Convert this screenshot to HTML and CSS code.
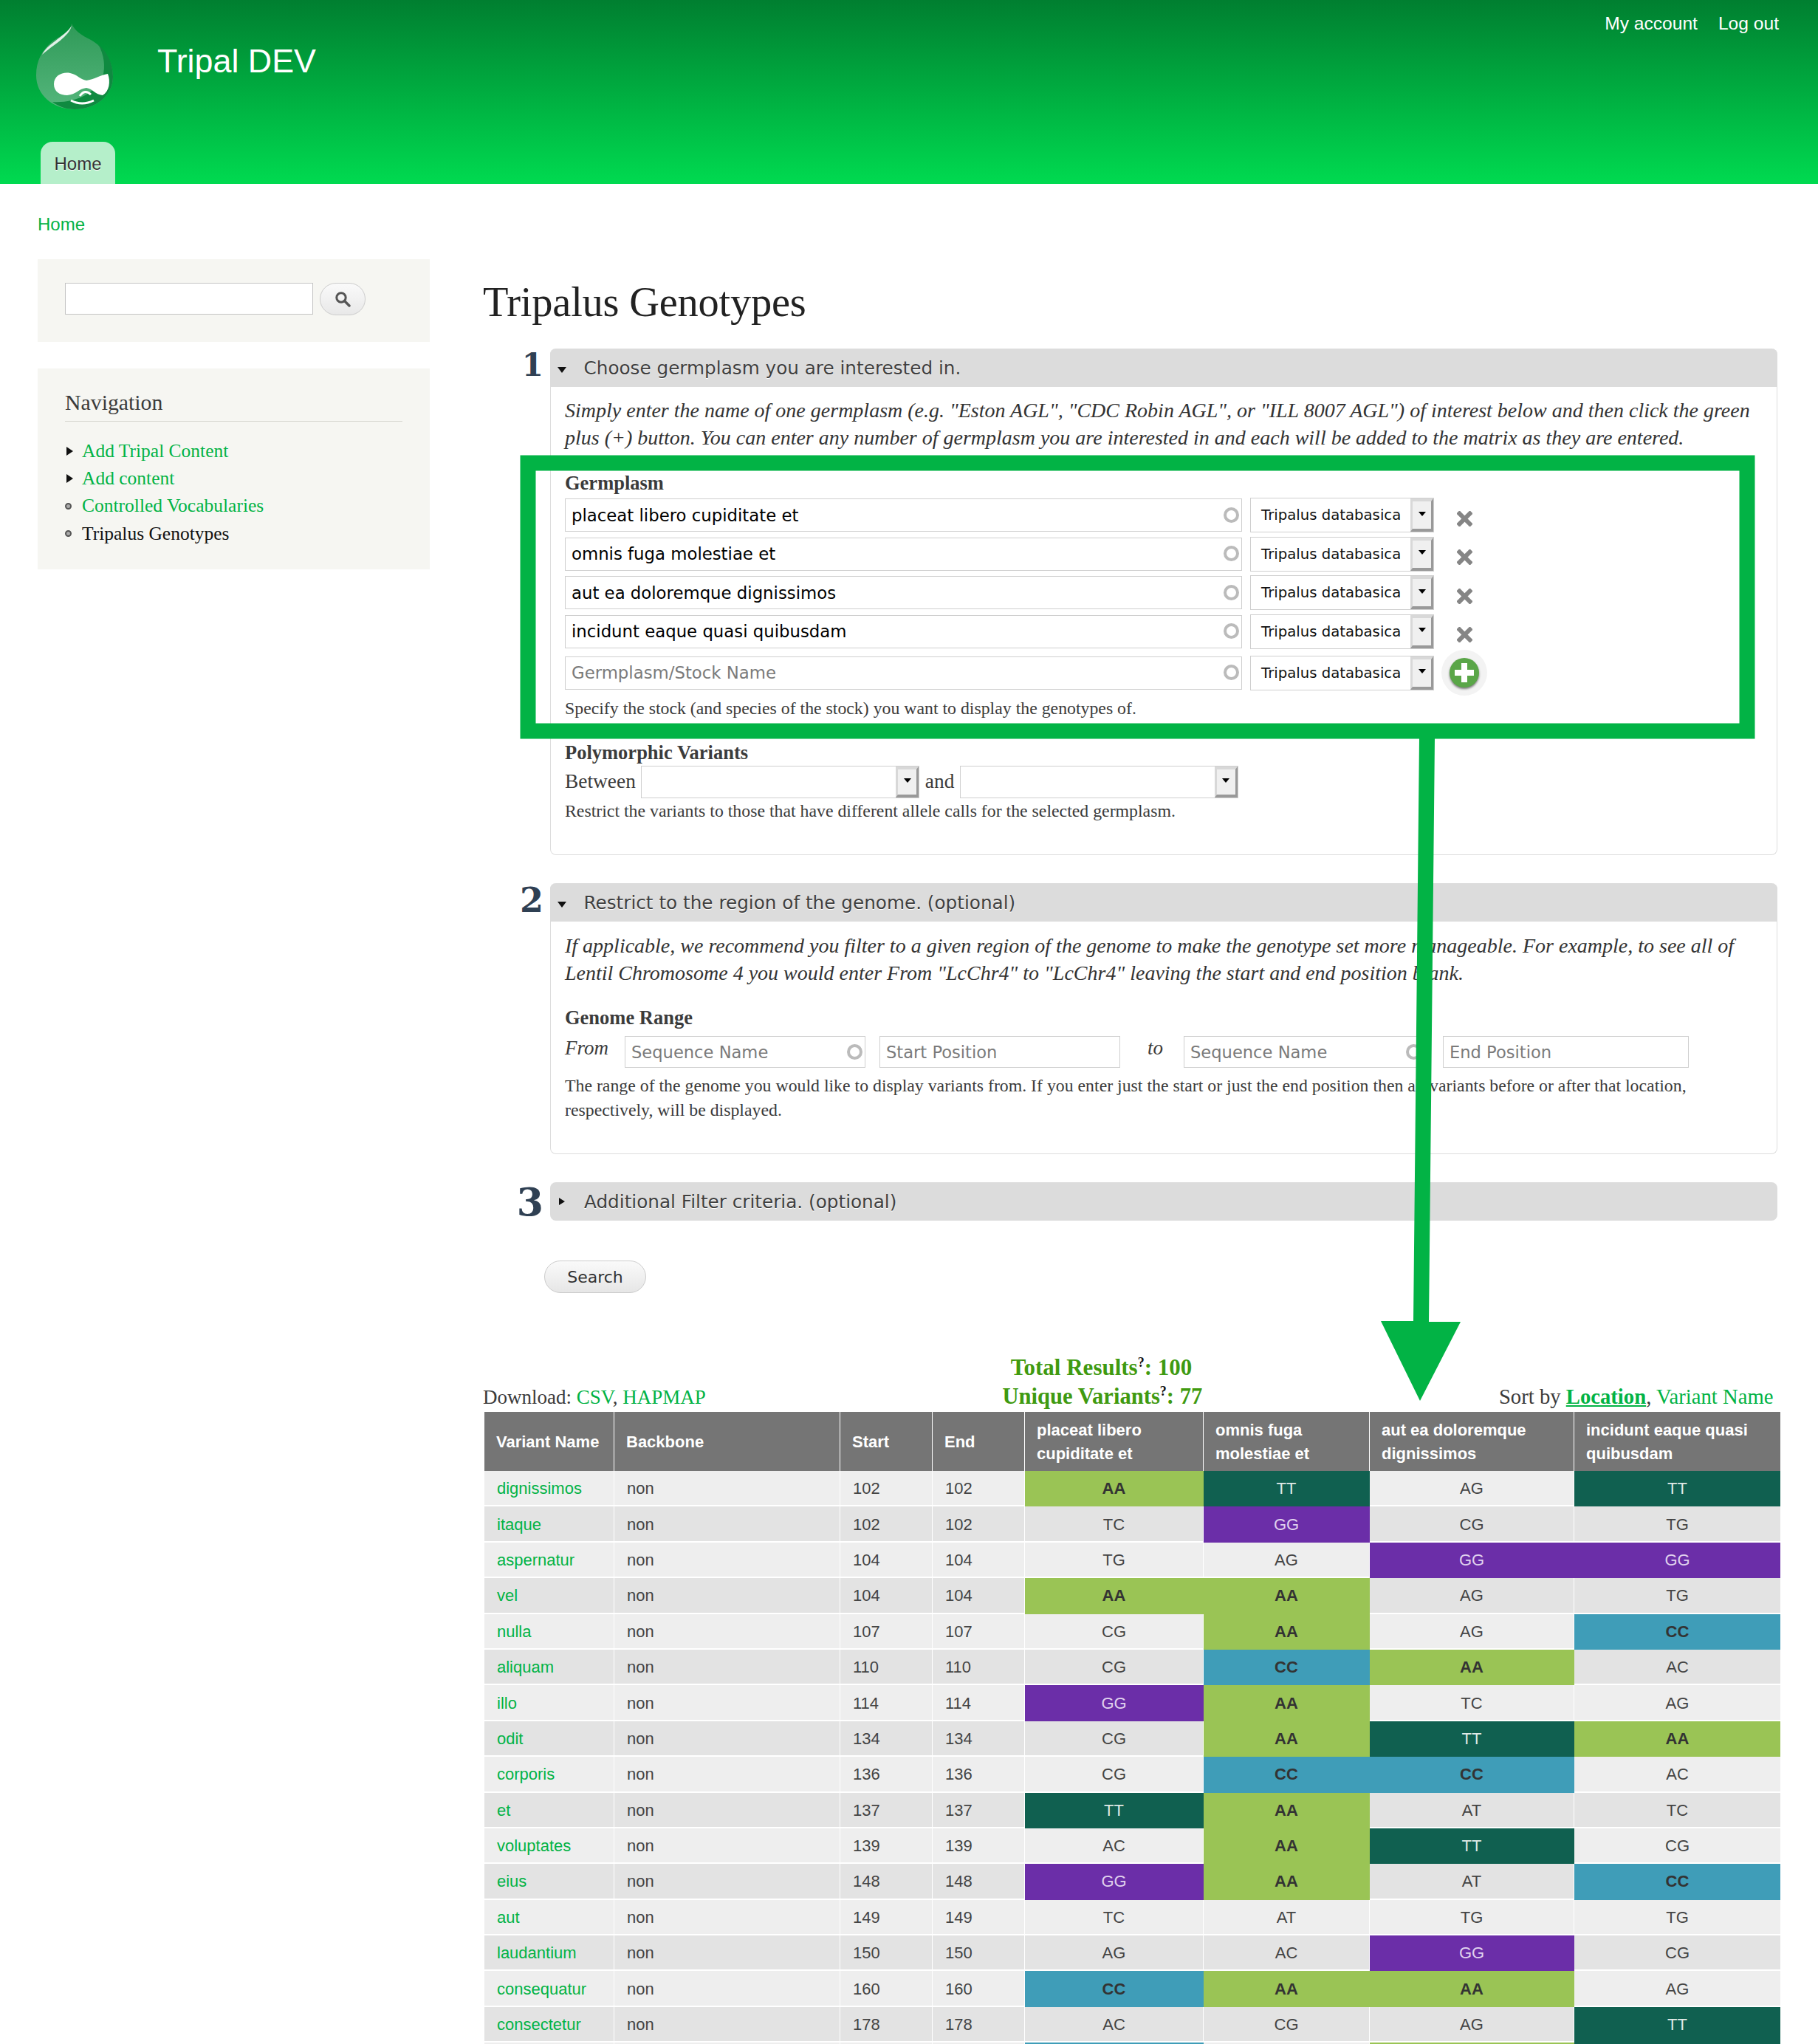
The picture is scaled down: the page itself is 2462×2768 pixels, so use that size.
FILE: index.html
```html
<!DOCTYPE html>
<html lang="en">
  <head>
    <meta charset="UTF-8" />
    <title>Tripalus Genotypes | Tripal DEV</title>
    <link rel="stylesheet" href="styles.css">
  </head>
  <body>
    <header class="site-header">
      <div class="branding">
        <svg class="logo" width="104" height="116" viewBox="0 0 104 116">
          <defs>
            <linearGradient id="dropFill" x1="0" y1="0" x2="0" y2="1">
              <stop offset="0" stop-color="#2f9a58" />
              <stop offset="1" stop-color="#55b67c" />
            </linearGradient>
          </defs>
          <path d="M48 0C52 10 62 16 74 22C92 32 104 52 104 72C104 98 80 116 52 116C22 116 0 96 0 70C0 50 8 36 22 24C34 16 46 12 48 0Z" fill="url(#dropFill)" />
          <path d="M84 28C96 38 104 54 104 72C104 98 80 116 52 116C40 116 30 112 22 106C50 108 80 96 90 72C94 58 92 42 84 28Z" fill="#0f8a40" />
          <path d="M48 3C44 18 24 28 8 42C14 28 38 18 48 3Z" fill="#ffffff" opacity="0.85" />
          <path d="M24 82C24 70 36 65 46 67C56 69 60 76 68 77C78 76 88 69 97 68C101 78 99 92 90 97C80 96 76 88 68 87C58 88 54 96 42 97C32 97 24 92 24 82Z" fill="#ffffff" />
          <path d="M47 104Q62 112 78 104" fill="none" stroke="#ffffff" stroke-width="3" />
          <path d="M59 98Q66 88 74 96" fill="none" stroke="#ffffff" stroke-width="3" />
        </svg>
        <a class="site-name" href="#">Tripal DEV</a>
        <nav class="secondary-menu">
          <a href="#">My account</a>
          <a href="#">Log out</a>
        </nav>
      </div>
      <a class="tab" href="#">Home</a>
    </header>

    <div class="breadcrumb"><a href="#">Home</a></div>

    <div class="page">
      <aside class="sidebar">
        <form class="block search-block">
          <input class="search-input" type="text" />
          <button class="search-btn" type="button" aria-label="Search">
            <svg width="22" height="22" viewBox="0 0 22 22">
              <circle cx="9" cy="9" r="6.2" fill="none" stroke="#555" stroke-width="3" />
              <path d="M13.5 13.5L20 20" stroke="#555" stroke-width="3.4" stroke-linecap="round" />
            </svg>
          </button>
        </form>
        <div class="block nav-block">
          <h2>Navigation</h2>
          <ul>
            <li class="collapsed"><a href="#">Add Tripal Content</a></li>
            <li class="collapsed"><a href="#">Add content</a></li>
            <li class="leaf"><a href="#">Controlled Vocabularies</a></li>
            <li class="leaf"><a class="active" href="#">Tripalus Genotypes</a></li>
          </ul>
        </div>
      </aside>

      <main class="content">
        <h1>Tripalus Genotypes</h1>

        <section class="step step-one">
          <div class="step-number">1</div>
          <div class="fieldset">
            <div class="legend"><span class="arrow-down"></span>Choose germplasm you are interested in.</div>
            <div class="fieldset-body">
              <p class="description">Simply enter the name of one germplasm (e.g. "Eston AGL", "CDC Robin AGL", or "ILL 8007 AGL") of interest below and then click the green plus (+) button. You can enter any number of germplasm you are interested in and each will be added to the matrix as they are entered.</p>

              <div class="field-label germplasm-label">Germplasm</div>
              <div class="germ-row">
                <div class="input-wrap germ-input"><input type="text" value="placeat libero cupiditate et" /></div>
                <div class="select species"><span>Tripalus databasica</span><i></i></div>
                <svg class="remove" width="21" height="21" viewBox="0 0 21 21"><path d="M3.5 3.5L17.5 17.5M17.5 3.5L3.5 17.5" stroke="#858585" stroke-width="6" stroke-linecap="square" /></svg>
              </div>
              <div class="germ-row">
                <div class="input-wrap germ-input"><input type="text" value="omnis fuga molestiae et" /></div>
                <div class="select species"><span>Tripalus databasica</span><i></i></div>
                <svg class="remove" width="21" height="21" viewBox="0 0 21 21"><path d="M3.5 3.5L17.5 17.5M17.5 3.5L3.5 17.5" stroke="#858585" stroke-width="6" stroke-linecap="square" /></svg>
              </div>
              <div class="germ-row">
                <div class="input-wrap germ-input"><input type="text" value="aut ea doloremque dignissimos" /></div>
                <div class="select species"><span>Tripalus databasica</span><i></i></div>
                <svg class="remove" width="21" height="21" viewBox="0 0 21 21"><path d="M3.5 3.5L17.5 17.5M17.5 3.5L3.5 17.5" stroke="#858585" stroke-width="6" stroke-linecap="square" /></svg>
              </div>
              <div class="germ-row">
                <div class="input-wrap germ-input"><input type="text" value="incidunt eaque quasi quibusdam" /></div>
                <div class="select species"><span>Tripalus databasica</span><i></i></div>
                <svg class="remove" width="21" height="21" viewBox="0 0 21 21"><path d="M3.5 3.5L17.5 17.5M17.5 3.5L3.5 17.5" stroke="#858585" stroke-width="6" stroke-linecap="square" /></svg>
              </div>
              <div class="germ-row germ-row-add">
                <div class="input-wrap germ-input"><input type="text" placeholder="Germplasm/Stock Name" /></div>
                <div class="select species"><span>Tripalus databasica</span><i></i></div>
                <button class="add-btn" type="button" aria-label="Add"></button>
              </div>
              <p class="help germ-help">Specify the stock (and species of the stock) you want to display the genotypes of.</p>

              <div class="field-label poly-label">Polymorphic Variants</div>
              <div class="poly-row">
                <span>Between</span>
                <div class="select poly-select"><span></span><i></i></div>
                <span>and</span>
                <div class="select poly-select"><span></span><i></i></div>
              </div>
              <p class="help poly-help">Restrict the variants to those that have different allele calls for the selected germplasm.</p>
            </div>
          </div>
        </section>

        <section class="step step-two">
          <div class="step-number">2</div>
          <div class="fieldset">
            <div class="legend"><span class="arrow-down"></span>Restrict to the region of the genome. (optional)</div>
            <div class="fieldset-body">
              <p class="description">If applicable, we recommend you filter to a given region of the genome to make the genotype set more manageable. For example, to see all of Lentil Chromosome 4 you would enter From "LcChr4" to "LcChr4" leaving the start and end position blank.</p>
              <div class="field-label range-label">Genome Range</div>
              <div class="range-row">
                <em class="range-from">From</em>
                <div class="input-wrap range-input"><input type="text" placeholder="Sequence Name" /></div>
                <input class="range-input range-pos" type="text" placeholder="Start Position" />
                <em class="range-to">to</em>
                <div class="input-wrap range-input"><input type="text" placeholder="Sequence Name" /></div>
                <input class="range-input range-end" type="text" placeholder="End Position" />
              </div>
              <p class="help range-help">The range of the genome you would like to display variants from. If you enter just the start or just the end position then all variants before or after that location, respectively, will be displayed.</p>
            </div>
          </div>
        </section>

        <section class="step step-three">
          <div class="step-number">3</div>
          <div class="fieldset closed">
            <div class="legend"><span class="arrow-right"></span>Additional Filter criteria. (optional)</div>
          </div>
        </section>

        <button class="search-submit" type="button">Search</button>

        <div class="results-total">Total Results<sup>?</sup>: 100</div>
        <div class="results-bar">
          <div class="downloads">Download: <a href="#">CSV</a>, <a href="#">HAPMAP</a></div>
          <div class="results-unique">Unique Variants<sup>?</sup>: 77</div>
          <div class="sort-by">Sort by <a class="current" href="#">Location</a>, <a href="#">Variant Name</a></div>
        </div>

        <table class="genotypes">
          <colgroup>
            <col class="c-name" /><col class="c-backbone" /><col class="c-pos" /><col class="c-pos" />
            <col class="c-g1" /><col class="c-g2" /><col class="c-g3" /><col class="c-g4" />
          </colgroup>
          <thead>
            <tr>
              <th>Variant Name</th><th>Backbone</th><th>Start</th><th>End</th>
              <th>placeat libero cupiditate et</th><th>omnis fuga molestiae et</th><th>aut ea doloremque dignissimos</th><th>incidunt eaque quasi quibusdam</th>
            </tr>
          </thead>
          <tbody>
            <tr><td><a href="#">dignissimos</a></td><td>non</td><td>102</td><td>102</td><td class="g aa">AA</td><td class="g tt">TT</td><td class="g">AG</td><td class="g tt">TT</td></tr>
            <tr><td><a href="#">itaque</a></td><td>non</td><td>102</td><td>102</td><td class="g">TC</td><td class="g gg">GG</td><td class="g">CG</td><td class="g">TG</td></tr>
            <tr><td><a href="#">aspernatur</a></td><td>non</td><td>104</td><td>104</td><td class="g">TG</td><td class="g">AG</td><td class="g gg">GG</td><td class="g gg">GG</td></tr>
            <tr><td><a href="#">vel</a></td><td>non</td><td>104</td><td>104</td><td class="g aa">AA</td><td class="g aa">AA</td><td class="g">AG</td><td class="g">TG</td></tr>
            <tr><td><a href="#">nulla</a></td><td>non</td><td>107</td><td>107</td><td class="g">CG</td><td class="g aa">AA</td><td class="g">AG</td><td class="g cc">CC</td></tr>
            <tr><td><a href="#">aliquam</a></td><td>non</td><td>110</td><td>110</td><td class="g">CG</td><td class="g cc">CC</td><td class="g aa">AA</td><td class="g">AC</td></tr>
            <tr><td><a href="#">illo</a></td><td>non</td><td>114</td><td>114</td><td class="g gg">GG</td><td class="g aa">AA</td><td class="g">TC</td><td class="g">AG</td></tr>
            <tr><td><a href="#">odit</a></td><td>non</td><td>134</td><td>134</td><td class="g">CG</td><td class="g aa">AA</td><td class="g tt">TT</td><td class="g aa">AA</td></tr>
            <tr><td><a href="#">corporis</a></td><td>non</td><td>136</td><td>136</td><td class="g">CG</td><td class="g cc">CC</td><td class="g cc">CC</td><td class="g">AC</td></tr>
            <tr><td><a href="#">et</a></td><td>non</td><td>137</td><td>137</td><td class="g tt">TT</td><td class="g aa">AA</td><td class="g">AT</td><td class="g">TC</td></tr>
            <tr><td><a href="#">voluptates</a></td><td>non</td><td>139</td><td>139</td><td class="g">AC</td><td class="g aa">AA</td><td class="g tt">TT</td><td class="g">CG</td></tr>
            <tr><td><a href="#">eius</a></td><td>non</td><td>148</td><td>148</td><td class="g gg">GG</td><td class="g aa">AA</td><td class="g">AT</td><td class="g cc">CC</td></tr>
            <tr><td><a href="#">aut</a></td><td>non</td><td>149</td><td>149</td><td class="g">TC</td><td class="g">AT</td><td class="g">TG</td><td class="g">TG</td></tr>
            <tr><td><a href="#">laudantium</a></td><td>non</td><td>150</td><td>150</td><td class="g">AG</td><td class="g">AC</td><td class="g gg">GG</td><td class="g">CG</td></tr>
            <tr><td><a href="#">consequatur</a></td><td>non</td><td>160</td><td>160</td><td class="g cc">CC</td><td class="g aa">AA</td><td class="g aa">AA</td><td class="g">AG</td></tr>
            <tr><td><a href="#">consectetur</a></td><td>non</td><td>178</td><td>178</td><td class="g">AC</td><td class="g">CG</td><td class="g">AG</td><td class="g tt">TT</td></tr>
            <tr><td></td><td></td><td></td><td></td><td class="g cc"></td><td class="g"></td><td class="g aa"></td><td class="g tt"></td></tr>
          </tbody>
        </table>
      </main>
    </div>

    <!-- green box and arrow drawn over the page -->
    <svg class="annotation" width="2462" height="2768" viewBox="0 0 2462 2768">
      <rect x="715" y="627" width="1651" height="363" fill="none" stroke="#02b345" stroke-width="21" />
      <path d="M1922 1000L1943 1000L1935 1790L1978 1790L1923 1897L1870 1789L1914 1789Z" fill="#02b345" />
    </svg>
  </body>
</html>
```

FILE: styles.css
```css
html, body {
  margin: 0;
  height: 2768px;
  overflow: hidden;
}
body {
  position: relative;
  background: #fff;
  color: #3b3b3b;
  font-family: "Liberation Serif", serif;
  font-size: 26px;
}
a {
  color: #02b345;
  text-decoration: none;
}
p {
  margin: 0;
}

/* header */
.site-header {
  height: 249px;
  padding: 0 53px 0 55px;
  display: flex;
  flex-direction: column;
  background: linear-gradient(#007f30, #00da50);
  font-family: "Liberation Sans", sans-serif;
}
.branding {
  height: 192px;
  display: flex;
  align-items: flex-start;
}
.logo {
  margin: 32px 0 0 -6px;
}
.site-name {
  margin: 55px 0 0 60px;
  color: #fff;
  font-size: 44.8px;
  line-height: 54px;
}
.secondary-menu {
  margin: 18px 0 0 auto;
  display: flex;
  gap: 28px;
}
.secondary-menu a {
  color: #fff;
  font-size: 24.6px;
  line-height: 28px;
}
.tab {
  width: 101px;
  height: 57px;
  box-sizing: border-box;
  padding-top: 16px;
  background: #b5efca;
  border-radius: 16px 16px 0 0;
  color: #333;
  font-size: 24px;
  line-height: 28px;
  text-align: center;
  text-shadow: 0 1px 0 #fff;
}

.breadcrumb {
  margin: 41px 0 33px 51px;
  font-family: "Liberation Sans", sans-serif;
  font-size: 24px;
  line-height: 28px;
}

.page {
  padding-left: 51px;
  display: flex;
  gap: 72px;
}

/* sidebar */
.sidebar {
  width: 531px;
  flex: none;
}
.block {
  background: #f6f6f2;
  margin-bottom: 36px;
}
.search-block {
  height: 112px;
  box-sizing: border-box;
  padding: 32px 0 0 37px;
  display: flex;
  gap: 9px;
  align-items: flex-start;
}
.search-input {
  width: 336px;
  height: 43px;
  box-sizing: border-box;
  border: 1px solid #c4c4c4;
  background: #fff;
}
.search-btn {
  width: 62px;
  height: 44px;
  padding: 0;
  display: flex;
  align-items: center;
  justify-content: center;
  border: 1px solid #ccc;
  border-radius: 22px;
  background: linear-gradient(#fafafa, #e8e8e8);
}
.nav-block {
  height: 272px;
  box-sizing: border-box;
  padding: 29px 37px 0;
}
.nav-block h2 {
  margin: 0;
  padding-bottom: 9px;
  border-bottom: 1px solid #d6d6d0;
  font-size: 29.8px;
  font-weight: normal;
  line-height: 33px;
}
.nav-block ul {
  margin: 21px 0 0;
  padding: 0;
  list-style: none;
}
.nav-block li {
  display: flex;
  align-items: center;
  height: 37.4px;
  font-size: 25.5px;
}
.nav-block li::before {
  content: "";
  flex: none;
  margin-right: 14px;
}
.nav-block li.collapsed::before {
  margin-left: 2px;
  margin-right: 12px;
  border-left: 9px solid #111;
  border-top: 6px solid transparent;
  border-bottom: 6px solid transparent;
}
.nav-block li.leaf::before {
  width: 9px;
  height: 9px;
  box-sizing: border-box;
  border: 2px solid #555;
  border-radius: 50%;
  background: #aaa;
}
.nav-block .active {
  color: #111;
}

/* main content */
.content {
  width: 1757px;
  flex: none;
}
h1 {
  margin: 0 0 32px;
  padding-top: 27px;
  color: #222;
  font-size: 56.4px;
  font-weight: normal;
  line-height: 62px;
  letter-spacing: -0.2px;
}
.step {
  display: flex;
  margin: 0 4px 38px 0;
}
.step-number {
  width: 82px;
  padding-right: 9px;
  flex: none;
  color: #2f4053;
  font-family: "DejaVu Serif", serif;
  font-size: 42px;
  font-weight: bold;
  line-height: 46px;
  text-align: right;
}
.step-two .step-number {
  font-size: 46px;
}
.step-three .step-number {
  padding-top: 4px;
  font-size: 52px;
}
.fieldset {
  flex: 1;
  box-sizing: border-box;
  border: 1px solid #ddd;
  border-top: 0;
  border-radius: 8px;
}
.step-one .fieldset {
  height: 686px;
}
.step-two .fieldset {
  height: 367px;
}
.fieldset.closed {
  border: 0;
  height: 52px;
}
.legend {
  height: 52px;
  margin: 0 -1px;
  display: flex;
  align-items: center;
  background: #dcdcdc;
  border-radius: 8px 8px 0 0;
  color: #3f3f3f;
  font-family: "DejaVu Sans", sans-serif;
  font-size: 24.7px;
  text-shadow: 0 1px 0 #fff;
}
.closed .legend {
  margin: 0;
  border-radius: 8px;
}
.arrow-down {
  margin: 5px 23.5px 0 10px;
  border-top: 8px solid #111;
  border-left: 6px solid transparent;
  border-right: 6px solid transparent;
}
.arrow-right {
  margin: 0 26px 0 12px;
  border-left: 8px solid #111;
  border-top: 5.5px solid transparent;
  border-bottom: 5.5px solid transparent;
}
.fieldset-body {
  padding: 13px 20px 0 19px;
}
.description {
  color: #333;
  font-size: 28px;
  font-style: italic;
  line-height: 37px;
}
.step-two .description {
  margin-top: 1px;
}
.field-label {
  font-size: 26.5px;
  font-weight: bold;
  line-height: 30px;
}
.germplasm-label {
  margin: 28px 0 5px;
}

/* inputs */
input {
  font-family: "DejaVu Sans", sans-serif;
  font-size: 22.8px;
}
input::placeholder {
  color: #7b7b7b;
  opacity: 1;
}
.input-wrap {
  position: relative;
}
.input-wrap input {
  width: 100%;
  height: 100%;
  box-sizing: border-box;
  padding: 0 8px;
  border: 1px solid #cfcfcf;
  color: #000;
  background: #fff;
}
/* autocomplete throbber */
.input-wrap::after {
  content: "";
  position: absolute;
  top: 50%;
  right: 4px;
  width: 21px;
  height: 21px;
  margin-top: -11px;
  box-sizing: border-box;
  border: 4px solid #bbb;
  border-radius: 50%;
}
.germ-row {
  height: 47px;
  margin-bottom: 5.5px;
  display: flex;
  align-items: center;
}
.germ-row-add {
  margin-top: 9px;
  margin-bottom: 0;
}
.germ-input {
  width: 917px;
  height: 45px;
  flex: none;
}
.select {
  height: 47px;
  box-sizing: border-box;
  display: flex;
  align-items: center;
  border: 1px solid #cfcfcf;
  background: #fff;
  overflow: hidden;
  color: #111;
  font-family: "DejaVu Sans", sans-serif;
  font-size: 19.7px;
}
.select span {
  flex: 1;
  padding-left: 14px;
  white-space: nowrap;
}
.select i {
  width: 31px;
  height: 100%;
  flex: none;
  box-sizing: border-box;
  display: flex;
  align-items: center;
  justify-content: center;
  border-style: solid;
  border-width: 4px 3px;
  border-color: #d8d8d8 #999 #999 #d8d8d8;
  background: #f0f0f0;
}
.select i::after {
  content: "";
  margin-top: -4px;
  border-top: 6px solid #000;
  border-left: 5px solid transparent;
  border-right: 5px solid transparent;
}
.species {
  width: 249px;
  margin-left: 11px;
  flex: none;
}
.remove {
  margin: 9px 0 0 31px;
}
.add-btn {
  width: 40px;
  height: 40px;
  margin-left: 21px;
  padding: 0;
  border: 0;
  border-radius: 50%;
  background:
    linear-gradient(#fff, #fff) center / 26px 8px no-repeat,
    linear-gradient(#fff, #fff) center / 8px 26px no-repeat,
    #5aa648;
  box-shadow: 0 2px 3px #777, 0 0 0 11px #f3f3f3;
}
.help {
  color: #3b3b3b;
  font-size: 23.8px;
  line-height: 33px;
}
.germ-help {
  margin-top: 8px;
}
.poly-label {
  margin-top: 28px;
}
.poly-row {
  margin-top: 3px;
  display: flex;
  align-items: center;
  gap: 7.5px;
  font-size: 27.4px;
}
.poly-select {
  width: 377px;
  height: 44px;
}
.poly-help {
  margin-top: 1px;
}
.range-label {
  margin-top: 27px;
}
.range-row {
  height: 43px;
  margin-top: 10px;
  display: flex;
  align-items: flex-start;
}
.range-row input {
  font-size: 22.6px;
}
.range-row em {
  font-size: 27px;
  line-height: 32px;
}
.range-from {
  width: 81px;
  flex: none;
}
.range-input {
  width: 326px;
  height: 43px;
  flex: none;
}
.range-pos,
.range-end {
  box-sizing: border-box;
  margin-left: 19px;
  padding: 0 8px;
  border: 1px solid #cfcfcf;
}
.range-end {
  width: 333px;
  margin-left: 25px;
}
.range-to {
  margin-left: 37px;
  width: 49px;
  flex: none;
}
.range-help {
  margin-top: 8px;
}
.search-submit {
  width: 138px;
  height: 44px;
  margin: 54px 0 0 83px;
  padding: 0;
  display: block;
  border: 1px solid #ccc;
  border-radius: 22px;
  background: linear-gradient(#fafafa, #e6e6e6);
  color: #333;
  font-family: "DejaVu Sans", sans-serif;
  font-size: 22px;
}

/* results */
.results-total,
.results-unique {
  color: #3f9a10;
  font-weight: bold;
}
.results-total {
  margin-top: 83px;
  padding-right: 82px;
  font-size: 31px;
  text-align: center;
  line-height: 36px;
}
.results-unique {
  font-size: 30.6px;
}
sup {
  color: #111;
  font-size: 18px;
  line-height: 0;
}
.results-bar {
  margin-top: 3px;
  display: flex;
  justify-content: space-between;
  align-items: baseline;
  padding-right: 9.5px;
  line-height: 36px;
}
.downloads {
  font-size: 27px;
}
.sort-by {
  font-size: 28.7px;
}
.sort-by .current {
  font-weight: bold;
  text-decoration: underline;
}
.genotypes {
  width: 1755px;
  margin: 2px 0 0 2px;
  table-layout: fixed;
  border-collapse: separate;
  border-spacing: 0;
  font-family: "Liberation Sans", sans-serif;
  font-size: 22px;
}
.c-name { width: 176px; }
.c-backbone { width: 306px; }
.c-pos { width: 125px; }
.c-g1 { width: 242px; }
.c-g2 { width: 225px; }
.c-g3 { width: 277px; }
.c-g4 { width: 279px; }
.genotypes th {
  height: 80px;
  box-sizing: border-box;
  padding: 2px 16px 0;
  background: #757575;
  border-right: 1px solid #fff;
  color: #fff;
  font-weight: bold;
  line-height: 32px;
  text-align: left;
}
.genotypes td {
  height: 48.4px;
  box-sizing: border-box;
  padding: 2px 17px 0;
  background: #eeeeee;
  border-right: 1px solid #fff;
  border-bottom: 2px solid #fff;
  color: #444;
}
.genotypes tbody tr:nth-child(even) td {
  background: #e3e3e3;
}
.genotypes th:last-child,
.genotypes td:last-child {
  border-right: 0;
}
.genotypes td.g {
  text-align: center;
}
/* coloured alleles run into each other, no white lines */
.genotypes tbody tr td.aa,
.genotypes tbody tr td.cc,
.genotypes tbody tr td.tt,
.genotypes tbody tr td.gg {
  border-color: transparent;
}
.genotypes tbody tr td.aa {
  background: #9ac455;
  color: #333;
  font-weight: bold;
}
.genotypes tbody tr td.cc {
  background: #3f9db8;
  color: #333;
  font-weight: bold;
}
.genotypes tbody tr td.tt {
  background: #106050;
  color: #dfe9e6;
}
.genotypes tbody tr td.gg {
  background: #6b2ea8;
  color: #e0d2ee;
}

.annotation {
  position: absolute;
  top: 0;
  left: 0;
  pointer-events: none;
}
```
